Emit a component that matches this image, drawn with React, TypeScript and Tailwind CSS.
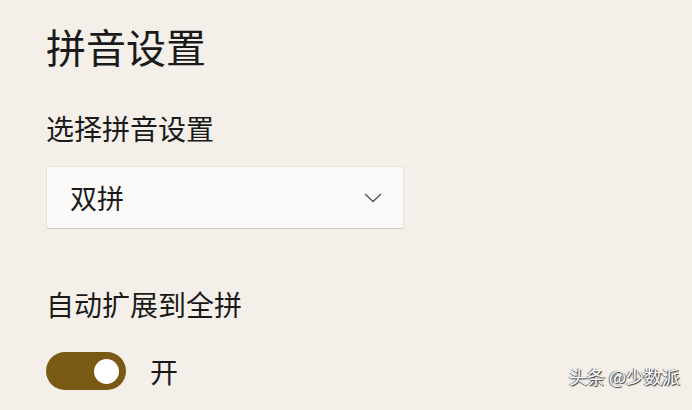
import React from 'react';

const font = { fontFamily: '"Noto Sans CJK SC", "Noto Sans", sans-serif' };

const App: React.FC = () => {
  return (
    <div className="relative w-[692px] h-[410px] overflow-hidden bg-[#f4f0e9] text-[#1a1a1a]" style={font}>
      <div className="pl-[46px] pt-[20px] flex flex-col">
        <h1 className="text-[40px] leading-[52px] font-normal">拼音设置</h1>

        <div className="mt-[38px] text-[28px] leading-[36px]">选择拼音设置</div>

        <div className="mt-[20px] w-[358px] h-[63px] bg-[#fbfaf8] border border-[#e4e0da] border-b-[#cfcac3] rounded-[3px] flex items-center justify-between pl-[23px] pr-[21px]">
          <span className="text-[27px] leading-none">双拼</span>
          <svg width="18" height="10" viewBox="0 0 18 10" fill="none" className="mt-[1px]">
            <path d="M1 1 L9 8.5 L17 1" stroke="#555" strokeWidth="1.4" />
          </svg>
        </div>

        <div className="mt-[57px] text-[28px] leading-[36px]">自动扩展到全拼</div>

        <div className="mt-[30px] flex items-center gap-[24px]">
          <div className="w-[80px] h-[38px] rounded-full bg-[#7a5914] flex items-center justify-end pr-[7px]">
            <div className="w-[25px] h-[25px] rounded-full bg-white" />
          </div>
          <span className="text-[28px] leading-none">开</span>
        </div>
      </div>

      <div
        className="absolute right-[12px] bottom-[25px] text-[18px] leading-none text-white"
        style={{ textShadow: '1px 1px 1px #333, -1px 0 1px #555' }}
      >
        头条 @少数派
      </div>
    </div>
  );
};

export default App;
